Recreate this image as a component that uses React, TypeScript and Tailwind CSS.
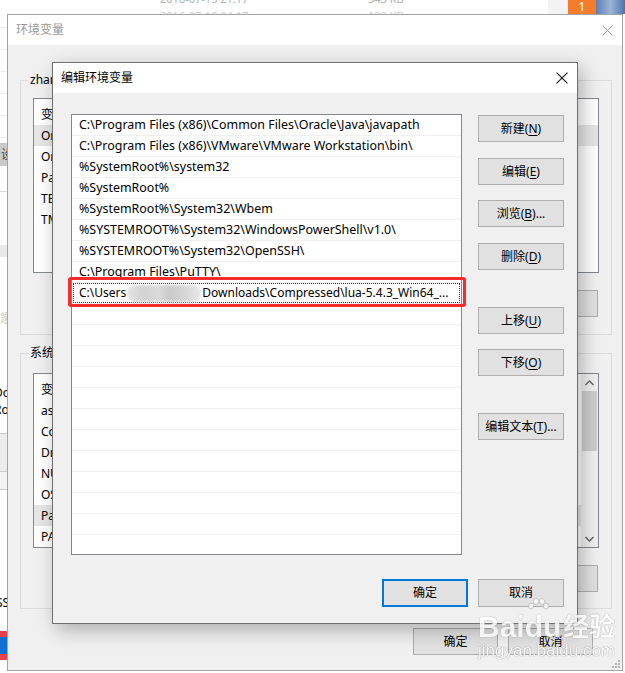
import React from "react";

const FONT = "font-['Noto_Sans','Noto_Sans_CJK_SC',sans-serif]";

const PATHS = [
  "C:\\Program Files (x86)\\Common Files\\Oracle\\Java\\javapath",
  "C:\\Program Files (x86)\\VMware\\VMware Workstation\\bin\\",
  "%SystemRoot%\\system32",
  "%SystemRoot%",
  "%SystemRoot%\\System32\\Wbem",
  "%SYSTEMROOT%\\System32\\WindowsPowerShell\\v1.0\\",
  "%SYSTEMROOT%\\System32\\OpenSSH\\",
  "C:\\Program Files\\PuTTY\\",
];

function CloseX({ color, size = 11 }: { color: string; size?: number }) {
  return (
    <svg width={size} height={size} viewBox="0 0 11 11">
      <path d="M0.5 0.5 L10.5 10.5 M10.5 0.5 L0.5 10.5" stroke={color} strokeWidth="1" />
    </svg>
  );
}

function WinButton({
  label,
  hot,
  suffix = "",
  className = "",
  primary = false,
}: {
  label: string;
  hot?: string;
  suffix?: string;
  className?: string;
  primary?: boolean;
}) {
  return (
    <div
      className={`flex items-center justify-center bg-[#e1e1e1] text-[12px] text-black ${
        primary ? "border-2 border-[#0078d7]" : "border border-[#adadad]"
      } ${className}`}
    >
      {label}
      {hot && (
        <>
          (<span className="underline underline-offset-2">{hot}</span>){suffix}
        </>
      )}
    </div>
  );
}

function Group({
  title,
  className = "",
  children,
}: {
  title: string;
  className?: string;
  children: React.ReactNode;
}) {
  return (
    <div className={`relative border border-[#dcdcdc] ${className}`}>
      <span className="absolute left-[8px] top-[-9px] bg-[#f0f0f0] px-[1px] text-[12px] leading-[16px] text-black">
        {title}
      </span>
      {children}
    </div>
  );
}

function Background() {
  return (
    <div className="absolute inset-0 bg-white">
      {/* explorer strip on top */}
      <div className="flex h-[14px] items-start">
        <div className="relative h-[14px] w-[548px] overflow-hidden">
          <span className="absolute left-[160px] top-[-9px] text-[11px] text-[#b0b0b0]">2018-07-15 21:17</span>
          <span className="absolute left-[368px] top-[-9px] text-[11px] text-[#b0b0b0]">343 KB</span>
          <span className="absolute left-[160px] top-[8px] text-[11px] text-[#c8c8c8]">2016-07-10 04:17</span>
          <span className="absolute left-[368px] top-[8px] text-[11px] text-[#c8c8c8]">188 KB</span>
        </div>
        <div className="h-[14px] w-[20px] bg-[#f3f3f3]" />
        <div className="flex h-[14px] w-[28px] items-center justify-center bg-[#f47d2c] text-[12px] leading-none text-white">
          1
        </div>
        <div className="h-[14px] flex-1 bg-gradient-to-r from-[#5d80b4] via-[#9db4d4] to-[#4f73a8]" />
      </div>
      {/* left strip of the explorer window */}
      <div className="w-[7px] overflow-hidden text-[12px] leading-[17px] text-black">
        <div className="h-[14px] border-b border-[#ececec]" />
        <div className="h-[22px] border-b border-[#ececec]" />
        <div className="h-[22px] border-b border-[#ececec]" />
        <div className="h-[22px] border-b border-[#ececec]" />
        <div className="h-[22px] border-b border-[#ececec]" />
        <div className="h-[22px] border-b border-[#ececec]" />
        <div className="h-[5px]" />
        <div className="h-[23px] bg-[#c9c9c9] pl-[1px] leading-[23px] text-[#444]">设</div>
        <div className="h-[26px] border-b border-[#d8d8d8]" />
        <div className="h-[53px]" />
        <div className="h-[12px] bg-[#e8e8e8]" />
        <div className="h-[51px]" />
        <div className="h-[22px] leading-[22px] text-[#cfcfcf]">鑑</div>
        <div className="h-[54px]" />
        <div className="ml-[-6px] h-[17px]">Do</div>
        <div className="ml-[-6px] h-[17px]">Ro</div>
        <div className="h-[15px]" />
        <div className="h-[39px] border-y border-[#cccccc] bg-[#ececec]" />
        <div className="h-[18px] border-b border-[#cccccc] bg-[#f2f2f2]" />
        <div className="h-[104px]" />
        <div className="ml-[-4px] h-[17px]">SS</div>
        <div className="h-[20px]" />
        <div className="h-[6px] bg-[#e8414a]" />
        <div className="h-[17px] bg-[#0f6fd2]" />
        <div className="h-[6px] bg-[#e8414a]" />
      </div>
    </div>
  );
}

function OuterList({
  rows,
  highlight,
  scroll = false,
  className = "",
}: {
  rows: string[];
  highlight: number;
  scroll?: boolean;
  className?: string;
}) {
  return (
    <div className={`flex border border-[#828790] bg-white ${className}`}>
      <div className="flex-1 pt-[5px]">
        {rows.map((r, i) => (
          <div
            key={i}
            className={`h-[21px] pl-[7px] text-[12px] leading-[21px] text-black ${
              i === highlight ? "bg-[#e6e6e6]" : ""
            }`}
          >
            {r}
          </div>
        ))}
      </div>
      {scroll && (
        <div className="flex w-[17px] flex-col items-center bg-[#f0f0f0]">
          <div className="flex h-[17px] items-center justify-center">
            <svg width="9" height="6" viewBox="0 0 9 6">
              <path d="M0.5 5 L4.5 1 L8.5 5" stroke="#606060" fill="none" strokeWidth="1.3" />
            </svg>
          </div>
          <div className="h-[60px] w-[15px] bg-[#cdcdcd]" />
          <div className="flex-1" />
          <div className="flex h-[17px] items-center justify-center">
            <svg width="9" height="6" viewBox="0 0 9 6">
              <path d="M0.5 1 L4.5 5 L8.5 1" stroke="#606060" fill="none" strokeWidth="1.3" />
            </svg>
          </div>
        </div>
      )}
    </div>
  );
}

function OuterDialog() {
  return (
    <div className="absolute left-[7px] top-[14px] flex h-[657px] w-[616px] flex-col border border-[#a3a3a3] bg-[#f0f0f0]">
      <div className="flex h-[30px] items-center justify-between bg-white pl-[8px] pr-[9px]">
        <span className="text-[12px] text-[#999999]">环境变量</span>
        <CloseX color="#9a9a9a" />
      </div>
      <div className="flex flex-1 flex-col px-[12px] pt-[35px]">
        <Group title="zhangsan 的用户变量(U)" className="h-[255px] w-[592px] pl-[12px] pr-[12px] pt-[17px]">
          <OuterList
            rows={["变量", "OneDrive", "OneDriveConsumer", "Path", "TEMP", "TMP"]}
            highlight={1}
            className="h-[175px] w-[566px]"
          />
          <div className="mt-[17px] flex justify-end gap-[10px] pr-[1px]">
            <WinButton label="新建" hot="N" suffix="..." className="h-[27px] w-[85px]" />
            <WinButton label="编辑" hot="E" suffix="..." className="h-[27px] w-[85px]" />
            <WinButton label="删除" hot="D" className="h-[27px] w-[85px]" />
          </div>
        </Group>
        <Group title="系统变量(S)" className="mt-[18px] h-[256px] w-[592px] pl-[12px] pr-[12px] pt-[19px]">
          <OuterList
            rows={["变量", "asl.log", "ComSpec", "DriverData", "NUMBER_OF_PROCESSORS", "OS", "Path", "PATHEXT"]}
            highlight={6}
            scroll
            className="h-[175px] w-[566px]"
          />
          <div className="mt-[17px] flex justify-end gap-[10px] pr-[1px]">
            <WinButton label="新建" hot="W" suffix="..." className="h-[27px] w-[85px]" />
            <WinButton label="编辑" hot="I" suffix="..." className="h-[27px] w-[85px]" />
            <WinButton label="删除" hot="L" className="h-[27px] w-[85px]" />
          </div>
        </Group>
        <div className="mt-[19px] flex justify-end gap-[10px] pr-[17px]">
          <WinButton label="确定" className="h-[27px] w-[85px]" />
          <WinButton label="取消" className="h-[27px] w-[85px]" />
        </div>
      </div>
      <svg className="absolute bottom-[2px] right-[2px]" width="8" height="8" viewBox="0 0 8 8">
        <g fill="#b5b5b5">
          <rect x="6" y="0" width="2" height="2" />
          <rect x="3" y="3" width="2" height="2" />
          <rect x="6" y="3" width="2" height="2" />
          <rect x="0" y="6" width="2" height="2" />
          <rect x="3" y="6" width="2" height="2" />
          <rect x="6" y="6" width="2" height="2" />
        </g>
      </svg>
    </div>
  );
}

function PathList() {
  const empties = Array.from({ length: 12 });
  return (
    <div className="h-[441px] w-[391px] overflow-hidden border border-[#828790] bg-white">
      {PATHS.map((p) => (
        <div
          key={p}
          className="h-[21px] truncate border-b border-[#f0f0f0] pl-[7px] text-[12.45px] leading-[20px] text-black"
        >
          {p}
        </div>
      ))}
      <div className="h-[21px] border-b border-[#f0f0f0] px-[1px]">
        <div className="flex h-[20px] items-center border border-dotted border-[#333] pl-[5px] text-[12px] text-black">
          <span>C:\Users</span>
          <span className="mx-[1px] inline-block h-[17px] w-[74px] rounded-[7px] bg-[linear-gradient(90deg,#e4e4e4_0%,#d2d2d2_22%,#dadada_42%,#c9c9c9_58%,#d6d6d6_78%,#e8e8e8_100%)] blur-[1.5px]" />
          <span>Downloads\Compressed\lua-5.4.3_Win64_...</span>
        </div>
      </div>
      {empties.map((_, i) => (
        <div key={i} className="h-[21px] border-b border-[#f0f0f0]" />
      ))}
    </div>
  );
}

function EditDialog() {
  return (
    <div className="absolute left-[52px] top-[62px] flex h-[562px] w-[526px] flex-col border border-[#6f6f6f] bg-[#f0f0f0] shadow-[4px_6px_18px_rgba(0,0,0,0.28)]">
      <div className="flex h-[30px] items-center justify-between bg-white pl-[8px] pr-[9px]">
        <span className="text-[12px] text-black">编辑环境变量</span>
        <CloseX color="#111111" size={12} />
      </div>
      <div className="flex pl-[18px] pt-[21px]">
        <PathList />
        <div className="ml-[16px] flex flex-col pt-[1px]">
          <WinButton label="新建" hot="N" className="h-[27px] w-[86px]" />
          <WinButton label="编辑" hot="E" className="mt-[16px] h-[27px] w-[86px]" />
          <WinButton label="浏览" hot="B" suffix="..." className="mt-[15px] h-[27px] w-[86px]" />
          <WinButton label="删除" hot="D" className="mt-[16px] h-[27px] w-[86px]" />
          <WinButton label="上移" hot="U" className="mt-[37px] h-[27px] w-[86px]" />
          <WinButton label="下移" hot="O" className="mt-[15px] h-[27px] w-[86px]" />
          <WinButton label="编辑文本" hot="T" suffix="..." className="mt-[37px] h-[27px] w-[86px]" />
        </div>
      </div>
      <div className="mt-[24px] flex justify-end gap-[10px] pr-[13px]">
        <WinButton label="确定" primary className="h-[28px] w-[86px]" />
        <WinButton label="取消" className="h-[28px] w-[86px]" />
      </div>
    </div>
  );
}

function Watermark() {
  return (
    <div className="pointer-events-none absolute left-[478px] top-[612px] flex flex-col items-start opacity-80">
      <div className="flex items-end font-['Liberation_Sans','Noto_Sans_CJK_SC',sans-serif] text-[30px] font-bold leading-[30px] text-white [text-shadow:0_0_1px_#9a9a9a,0_0_1px_#9a9a9a]">
        <span>Bai</span>
        <span className="relative">
          <svg className="absolute left-[2px] top-[-14px]" width="22" height="18" viewBox="0 0 22 18">
            <g fill="#fff" stroke="#bbb" strokeWidth="1">
              <ellipse cx="4" cy="8" rx="2.5" ry="3" />
              <ellipse cx="9" cy="3.5" rx="2.5" ry="3" />
              <ellipse cx="15" cy="3.5" rx="2.5" ry="3" />
              <ellipse cx="19" cy="8" rx="2.5" ry="3" />
            </g>
          </svg>
          du
        </span>
        <span className="ml-[2px] text-[26px]">经验</span>
      </div>
      <span className="font-['Liberation_Sans',sans-serif] text-[17px] leading-[18px] text-white [text-shadow:0_0_1px_#8a8a8a,0_0_1px_#8a8a8a]">
        jingyan.baidu.com
      </span>
    </div>
  );
}

export default function App() {
  return (
    <div className={`relative h-[673px] w-[625px] overflow-hidden ${FONT}`}>
      <Background />
      <OuterDialog />
      <EditDialog />
      {/* red annotation around the selected row */}
      <div className="absolute left-[68px] top-[277px] h-[30px] w-[398px] rounded-[3px] border-[3px] border-[#f42c2c]" />
      <Watermark />
    </div>
  );
}
